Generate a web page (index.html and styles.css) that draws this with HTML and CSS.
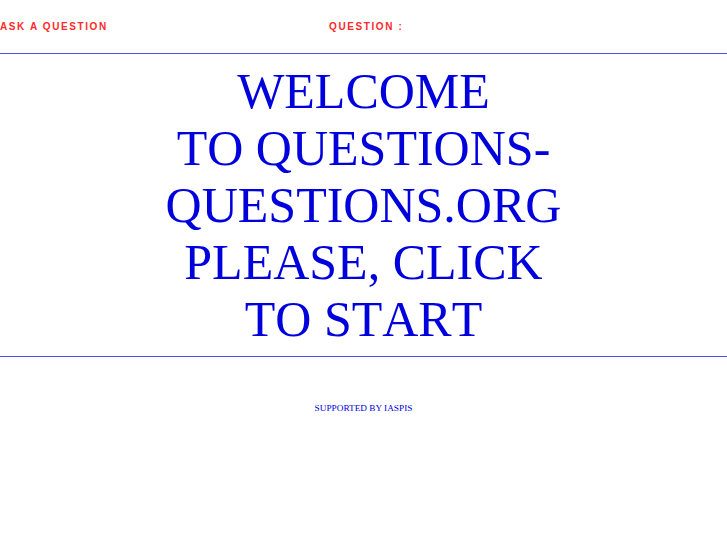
FILE: index.html
```html
<!DOCTYPE html>
<html>
<head>
<meta charset="utf-8">
<link rel="stylesheet" href="styles.css">
</head>
<body>
<div class="header">
  <a class="nav ask" href="#">ASK A QUESTION</a>
  <span class="nav question">QUESTION :</span>
</div>
<div class="welcome">
  <a href="#">WELCOME<br>TO QUESTIONS-<br>QUESTIONS.ORG<br>PLEASE, CLICK<br>TO START</a>
</div>
<div class="footer">
  <a href="#">SUPPORTED BY IASPIS</a>
</div>
</body>
</html>
```
FILE: styles.css
```css
html, body {
  margin: 0;
  padding: 0;
  background: #fff;
}
body {
  width: 727px;
}
a {
  text-decoration: none;
}
.header {
  display: flex;
  align-items: center;
  height: 53px;
  border-bottom: 1px solid #4d4df0;
}
.nav {
  font-family: "Liberation Sans", Arial, sans-serif;
  font-weight: bold;
  font-size: 10px;
  letter-spacing: 0.16em;
  color: #ff2a2a;
  margin-top: -1px;
}
.ask {
  width: 329px;
}
.welcome {
  text-align: center;
  padding: 9px 0 8px;
  border-bottom: 1px solid #4d4df0;
  font-family: "Liberation Serif", "Times New Roman", serif;
  font-size: 50px;
  line-height: 57px;
  font-kerning: none;
}
.welcome a {
  color: #0000dd;
}
.footer {
  text-align: center;
  padding-top: 46px;
  font-family: "Liberation Serif", "Times New Roman", serif;
  font-size: 9.25px;
}
.footer a {
  color: #0000dd;
}
```
